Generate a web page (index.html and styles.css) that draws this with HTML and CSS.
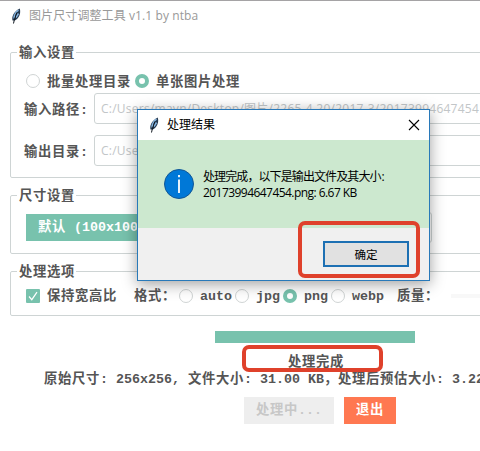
FILE: index.html
```
<!DOCTYPE html>
<html lang="zh-CN">
<head>
<meta charset="utf-8">
<title>图片尺寸调整工具</title>
<link rel="stylesheet" href="styles.css">
</head>
<body>
<svg width="0" height="0" class="defs">
  <symbol id="feather" viewBox="0 0 10 16">
    <path d="M1.500 12.500C.5 9 2.500 3.500 8.800 .5C10 5 8.500 10 3.800 12.500Z" fill="#24384f"/>
    <path d="M3 10.500C3 7 5 4 7.500 2.200M5 9.500L7.500 5.500" stroke="#86b4de" stroke-width="1.500" fill="none"/>
    <path d="M5.800 4.500L3.300 12L2.500 15.500" stroke="#111820" stroke-width="1" fill="none"/>
  </symbol>
</svg>
<div class="window">
  <header class="titlebar">
    <svg class="feather"><use href="#feather"/></svg>
    <span class="title">图片尺寸调整工具 v1.1 by ntba</span>
  </header>
  <main class="content">
    <fieldset class="group group-input">
      <legend>输入设置</legend>
      <div class="modes">
        <i class="radio"></i><span class="mode-name first">批量处理目录</span>
        <i class="radio on"></i><span class="mode-name">单张图片处理</span>
      </div>
      <div class="field"><span class="label">输入路径<b class="l">:</b></span><div class="entry">C:/Users/mayn/Desktop/图片/2265-4.20/2017-3/20173994647454</div></div>
      <div class="field"><span class="label">输出目录<b class="l">:</b></span><div class="entry">C:/Users/mayn/Desktop</div></div>
    </fieldset>
    <fieldset class="group group-size">
      <legend>尺寸设置</legend>
      <div class="size-row">
        <div class="preset">默认<b class="l"> (100x100)</b></div>
        <div class="combo"></div>
      </div>
    </fieldset>
    <fieldset class="group group-options">
      <legend>处理选项</legend>
      <div class="options">
        <svg class="check" viewBox="0 0 14 14"><rect width="14" height="14" rx="1" fill="#78c2ad"/><path d="M3 7.500L5.800 10.700L11 3.200" fill="none" stroke="#fff" stroke-width="1.200"/></svg>
        <span class="keep">保持宽高比</span>
        <span class="format">格式：</span>
        <span class="choice"><i class="radio"></i><b class="l">auto</b></span>
        <span class="choice"><i class="radio"></i><b class="l">jpg</b></span>
        <span class="choice"><i class="radio on"></i><b class="l">png</b></span>
        <span class="choice"><i class="radio"></i><b class="l">webp</b></span>
        <span class="quality">质量：</span>
        <i class="slider"></i>
      </div>
    </fieldset>
    <div class="progress"></div>
    <div class="status">处理完成</div>
    <div class="summary">原始尺寸<b class="l">: 256x256, </b>文件大小<b class="l">: 31.00 KB</b>，处理后预估大小<b class="l">: 3.22</b></div>
    <div class="actions">
      <button class="btn busy">处理中<b class="l">...</b></button>
      <button class="btn exit">退出</button>
    </div>
  </main>
  <section class="dialog">
    <header class="dialog-title">
      <svg class="feather"><use href="#feather"/></svg>
      <span>处理结果</span>
      <svg class="close" viewBox="0 0 12 12"><path d="M1 1L11 11M11 1L1 11" stroke="#000" stroke-width="1.100"/></svg>
    </header>
    <div class="dialog-body">
      <svg class="info" viewBox="0 0 30 30"><circle cx="15" cy="15" r="14.500" fill="#0078d7" stroke="#125795"/><path d="M15 10.500V24M15 6V8.300" stroke="#fff" stroke-width="1.800"/></svg>
      <div class="message"><div>处理完成，以下是输出文件及其大小<span class="colon">:</span></div><div class="result">20173994647454.png: 6.67 KB</div></div>
    </div>
    <footer class="dialog-footer"><button class="ok">确定</button></footer>
  </section>
  <i class="mark mark-ok"></i>
  <i class="mark mark-status"></i>
</div>
</body>
</html>
```
FILE: styles.css
```
* { box-sizing: border-box; }
body { margin: 0; overflow: hidden; }
.defs { position: absolute; }
.window {
  position: relative;
  width: 480px;
  height: 451px;
  overflow: hidden;
  background: #fff;
  border-top: 1px solid #a5a3a5;
  font: bold 13.33px/15px "Liberation Mono", "Noto Sans CJK SC", monospace;
  letter-spacing: .67px;
  color: #555;
  white-space: nowrap;
}
.l { letter-spacing: 0; white-space: pre; }
.feather { width: 10px; height: 16px; flex: none; }
.titlebar {
  height: 30px;
  display: flex;
  align-items: center;
  padding-left: 11px;
  gap: 8px;
}
.title {
  font: 12px/16px "Open Sans", "Noto Sans CJK SC", sans-serif;
  letter-spacing: .1px;
  color: #999;
}
.content { padding: 14px 0 0 10px; width: 560px; }
.group {
  margin: 0 0 10px;
  padding: 0;
  min-width: 0;
  border: 1px solid #ced4d4;
  border-radius: 2px;
}
.group legend { margin-left: 6px; padding: 0 1px 0 2px; height: 15px; line-height: 17px; }
.group-input { height: 133px; }
.group-size { height: 66px; margin-bottom: 10px; }
.group-options { height: 52px; }
.radio {
  display: block;
  flex: none;
  width: 14px;
  height: 14px;
  border: 1px solid #d0d4d4;
  border-radius: 50%;
  background: #fff;
}
.radio.on { border: 4px solid #78c2ad; }
.modes { display: flex; align-items: center; padding: 14px 0 0 15px; gap: 7px; height: 28px; }
.mode-name { padding-top: 3px; }
.mode-name.first { width: 81px; }
.field { display: flex; align-items: center; height: 31px; margin: 5px 0 11px 13px; }
.field + .field { margin-top: 0; }
.label { width: 70px; padding-top: 3px; }
.entry {
  width: 460px;
  height: 31px;
  border: 1px solid #ced4d4;
  border-radius: 3px;
  padding-left: 6px;
  font: 12px/29px "Open Sans", "Noto Sans CJK SC", sans-serif;
  letter-spacing: .25px;
  color: #c2c6c8;
}
.size-row { display: flex; align-items: center; padding: 8px 0 0 15px; gap: 20px; height: 40px; }
.preset { background: #78c2ad; color: #fff; height: 27px; line-height: 27px; padding: 0 12px; width: 140px; }
.combo { width: 246px; height: 31px; border: 1px solid #ced4d4; border-radius: 3px; }
.options { display: flex; align-items: center; padding: 7px 0 0 15px; height: 27px; }
.check { width: 14px; height: 14px; flex: none; }
.keep { width: 94px; padding-left: 7px; flex: none; }
.format { width: 45px; flex: none; }
.choice { display: flex; align-items: center; gap: 7px; margin-right: 3px; }
.quality { width: 54px; margin-left: 10px; }
.slider { width: 60px; height: 4px; background: #f8f8f8; }
.progress { width: 200px; height: 12px; margin: 15px 0 0 205px; background: #78c2ad; }
.status { margin: 12px 0 0 278px; height: 15px; }
.summary { margin: 2px 0 0 34px; height: 15px; }
.actions { display: flex; gap: 10px; margin: 10px 0 0 234px; }
.btn { border: 0; padding: 0; height: 27px; font: inherit; letter-spacing: inherit; color: #fff; }
.busy { width: 90px; background: #eee; color: #c7c7c7; }
.exit { width: 52px; background: #ff7851; }
.dialog {
  position: absolute;
  left: 137px;
  top: 108px;
  width: 293px;
  height: 172px;
  border: 1px solid #2879b9;
  background: #f0f0f0;
  box-shadow: 0 3px 14px rgba(0, 0, 0, .38);
  font: 12px/16px "Open Sans", "Noto Sans CJK SC", sans-serif;
  letter-spacing: 0;
  color: #000;
}
.dialog-title { display: flex; align-items: center; height: 30px; padding: 0 9px 0 11px; gap: 8px; background: #fff; }
.close { width: 12px; height: 12px; margin-left: auto; }
.dialog-body { display: flex; height: 88px; padding: 29px 0 0 26px; gap: 9px; background: #cce8cf; }
.info { width: 30px; height: 30px; flex: none; }
.message { letter-spacing: -.9px; }
.colon { padding-left: 1px; }
.result { letter-spacing: -.55px; }
.dialog-footer { display: flex; justify-content: flex-end; padding: 13px 20px 0 0; }
.ok { width: 86px; height: 26px; padding: 0; border: 2px solid #1d70b3; background: #e1e1e1; font: 11.5px/20px "Noto Sans CJK SC", sans-serif; color: #000; }
.mark { position: absolute; border: 4px solid #df412b; border-radius: 7px; }
.mark-ok { left: 298px; top: 220px; width: 122px; height: 57px; }
.mark-status { left: 242px; top: 344px; width: 141px; height: 27px; }
```
